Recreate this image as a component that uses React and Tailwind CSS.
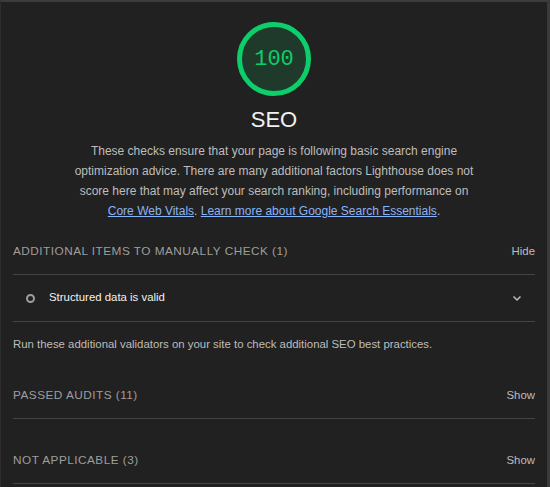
import React from "react";

function Gauge() {
  return (
    <div className="relative w-[78px] h-[78px]">
      <svg width="78" height="78" viewBox="0 0 78 78" className="absolute inset-0">
        <circle cx="39" cy="39" r="34.5" fill="#1f3a2a" stroke="#0cce6b" strokeWidth="5" />
      </svg>
      <div className="absolute inset-0 flex items-center justify-center text-[22px] text-[#0cce6b] [font-family:'Liberation_Mono',monospace]">
        100
      </div>
    </div>
  );
}

function Chevron() {
  return (
    <svg width="12" height="12" viewBox="0 0 12 12">
      <path d="M2.5 4.5 L6 8 L9.5 4.5" fill="none" stroke="#bdbdbd" strokeWidth="1.5" />
    </svg>
  );
}

function GroupHeader({ title, action }) {
  return (
    <div className="flex items-center justify-between h-[46px] border-b border-[#444]">
      <span className="text-[11.8px] tracking-[0.04em] text-[#9e9e9e]">{title}</span>
      <span className="text-[11.4px] text-[#bdbdbd]">{action}</span>
    </div>
  );
}

export default function App() {
  return (
    <div className="w-[550px] h-[487px] overflow-hidden bg-[#202020] [font-family:'Liberation_Sans',Arial,sans-serif]">
      <div className="h-full border-t-2 border-t-[#3c3c3c] border-l border-l-[#2e2e2e] border-r-[3px] border-r-[#3a3a3a] bg-[#212121]">
        <div className="flex flex-col items-center pt-[18px]">
          <Gauge />
          <div className="mt-[8px] text-[22px] leading-[28px] text-[#f1f1f1]">SEO</div>
          <p className="mt-[7px] max-w-[400px] text-center text-[12px] leading-[20px] text-[#bdbdbd]">
            These checks ensure that your page is following basic search engine optimization advice. There are many additional factors Lighthouse does not score here that may affect your search ranking, including performance on{" "}
            <span className="underline text-[#8ab4f8]">Core Web Vitals</span>.{" "}
            <span className="underline text-[#8ab4f8]">Learn more about Google Search Essentials</span>.
          </p>
        </div>
        <div className="pl-[12px] pr-[12px] mt-[8px]">
          <GroupHeader title="ADDITIONAL ITEMS TO MANUALLY CHECK (1)" action="Hide" />
          <div className="flex items-center h-[47px] border-b border-[#444] pl-[13px] pr-[12px]">
            <span className="w-[9px] h-[9px] rounded-full border-2 border-[#9e9e9e] mr-[14px]"></span>
            <span className="flex-1 text-[11.4px] text-[#f1f1f1]">Structured data is valid</span>
            <Chevron />
          </div>
          <div className="pt-[14px] leading-[16px] text-[11.4px] text-[#bdbdbd]">
            Run these additional validators on your site to check additional SEO best practices.
          </div>
          <div className="mt-[21px]">
            <GroupHeader title="PASSED AUDITS (11)" action="Show" />
          </div>
          <div className="mt-[19px]">
            <GroupHeader title="NOT APPLICABLE (3)" action="Show" />
          </div>
        </div>
      </div>
    </div>
  );
}
